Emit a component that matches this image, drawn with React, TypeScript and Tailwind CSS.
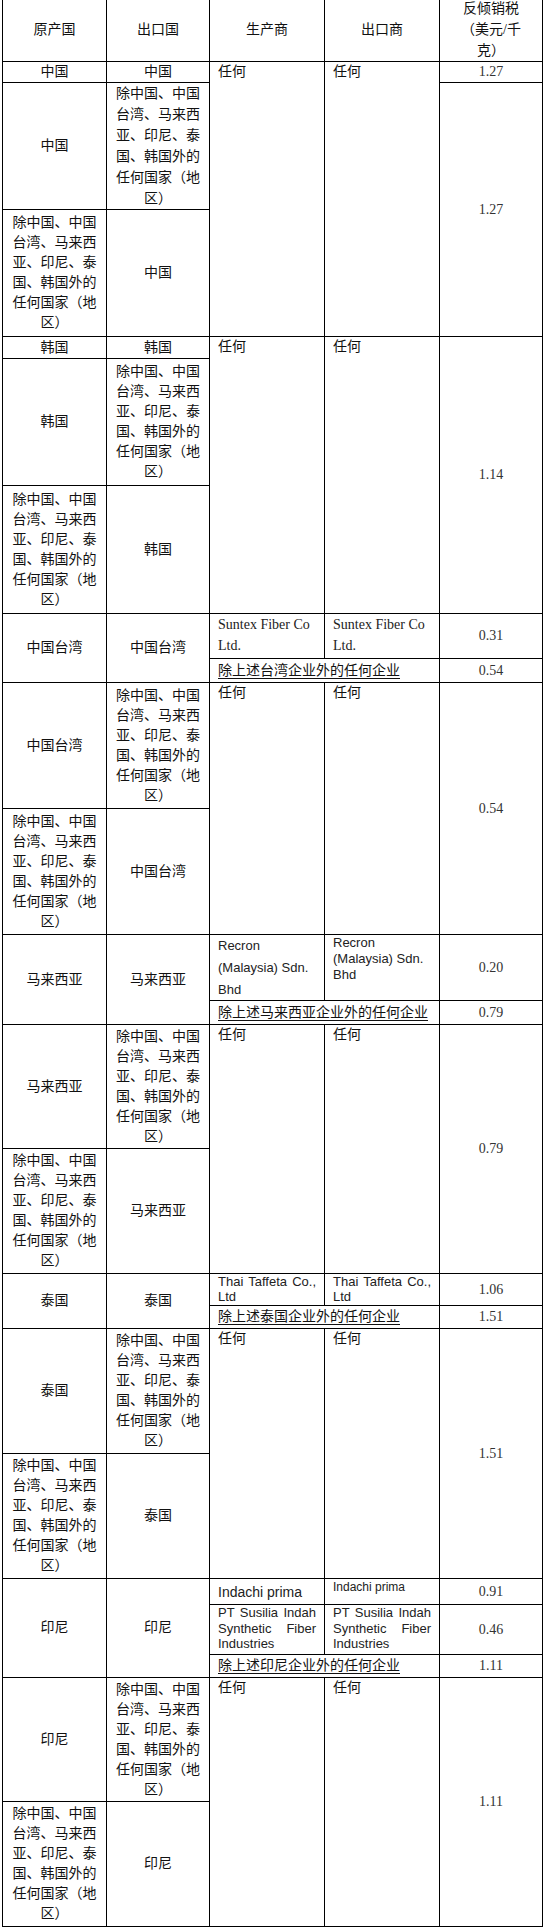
import React from "react";

const EX = "除中国、中国台湾、马来西亚、印尼、泰国、韩国外的任何国家（地区）";
const B = "border-r border-b border-black";

function Mid({ at, children, lh = "leading-[20px]" }: { at: string; children: React.ReactNode; lh?: string }) {
  return (
    <div className={`${at} ${B} flex items-center justify-center text-center px-[8px] text-[14px] ${lh} text-[#111]`}>
      <div>{children}</div>
    </div>
  );
}

function Num({ at, children }: { at: string; children: React.ReactNode }) {
  return (
    <div className={`${at} ${B} flex items-center justify-center text-[14px] leading-[20px] text-[#333]`}>
      {children}
    </div>
  );
}

function Top({ at, children }: { at: string; children: React.ReactNode }) {
  return <div className={`${at} ${B} px-[8px] text-[14px] leading-[20px] text-[#111]`}>{children}</div>;
}

function Left({ at, children }: { at: string; children: React.ReactNode }) {
  return (
    <div className={`${at} ${B} flex items-center px-[8px] text-[14px] leading-[20px] text-[#111]`}>
      <span className="underline underline-offset-[3px] decoration-[1px]">{children}</span>
    </div>
  );
}

export default function App() {
  return (
    <div className="bg-white min-h-[1929px] w-[551px] overflow-hidden font-['Liberation_Serif','Noto_Sans_CJK_SC',serif]">
      <div className="-mt-[3px] ml-[2px] w-[541px] border-l border-t border-black grid grid-cols-[104px_103px_115px_115px_103px] grid-rows-[64px_21px_127px_127px_22px_127px_128px_45px_24px_126px_126px_66px_24px_124px_125px_32px_23px_125px_125px_26px_50px_23px_124px_125px]">
        {/* header */}
        <Mid at="row-[1] col-[1]" lh="leading-[21px]">原产国</Mid>
        <Mid at="row-[1] col-[2]" lh="leading-[21px]">出口国</Mid>
        <Mid at="row-[1] col-[3]" lh="leading-[21px]">生产商</Mid>
        <Mid at="row-[1] col-[4]" lh="leading-[21px]">出口商</Mid>
        <Mid at="row-[1] col-[5]" lh="leading-[21px]">
          反倾销税
          <br />
          （美元/千
          <br />
          克）
        </Mid>

        {/* China */}
        <Mid at="row-[2] col-[1]">中国</Mid>
        <Mid at="row-[2] col-[2]">中国</Mid>
        <Top at="row-[2/span_3] col-[3]">任何</Top>
        <Top at="row-[2/span_3] col-[4]">任何</Top>
        <Num at="row-[2] col-[5]">1.27</Num>
        <Mid at="row-[3] col-[1]">中国</Mid>
        <Mid at="row-[3] col-[2]" lh="leading-[21px]">{EX}</Mid>
        <Num at="row-[3/span_2] col-[5]">1.27</Num>
        <Mid at="row-[4] col-[1]">{EX}</Mid>
        <Mid at="row-[4] col-[2]">中国</Mid>

        {/* Korea */}
        <Mid at="row-[5] col-[1]">韩国</Mid>
        <Mid at="row-[5] col-[2]">韩国</Mid>
        <Top at="row-[5/span_3] col-[3]">任何</Top>
        <Top at="row-[5/span_3] col-[4]">任何</Top>
        <Num at="row-[5/span_3] col-[5]">1.14</Num>
        <Mid at="row-[6] col-[1]">韩国</Mid>
        <Mid at="row-[6] col-[2]">{EX}</Mid>
        <Mid at="row-[7] col-[1]">{EX}</Mid>
        <Mid at="row-[7] col-[2]">韩国</Mid>

        {/* Taiwan */}
        <Mid at="row-[8/span_2] col-[1]">中国台湾</Mid>
        <Mid at="row-[8/span_2] col-[2]">中国台湾</Mid>
        <div className={`row-[8] col-[3] ${B} px-[8px] text-[14px] leading-[21px] text-[#222]`}>Suntex Fiber Co Ltd.</div>
        <div className={`row-[8] col-[4] ${B} px-[8px] text-[14px] leading-[21px] text-[#222]`}>Suntex Fiber Co Ltd.</div>
        <Num at="row-[8] col-[5]">0.31</Num>
        <Left at="row-[9] col-[3/span_2]">除上述台湾企业外的任何企业</Left>
        <Num at="row-[9] col-[5]">0.54</Num>
        <Mid at="row-[10] col-[1]">中国台湾</Mid>
        <Mid at="row-[10] col-[2]">{EX}</Mid>
        <Top at="row-[10/span_2] col-[3]">任何</Top>
        <Top at="row-[10/span_2] col-[4]">任何</Top>
        <Num at="row-[10/span_2] col-[5]">0.54</Num>
        <Mid at="row-[11] col-[1]">{EX}</Mid>
        <Mid at="row-[11] col-[2]">中国台湾</Mid>

        {/* Malaysia */}
        <Mid at="row-[12/span_2] col-[1]">马来西亚</Mid>
        <Mid at="row-[12/span_2] col-[2]">马来西亚</Mid>
        <div className={`row-[12] col-[3] ${B} px-[8px] font-['Liberation_Sans',sans-serif] text-[13px] leading-[22px] text-[#222]`}>Recron (Malaysia) Sdn. Bhd</div>
        <div className={`row-[12] col-[4] ${B} px-[8px] font-['Liberation_Sans',sans-serif] text-[13px] leading-[16px] text-[#222]`}>Recron (Malaysia) Sdn. Bhd</div>
        <Num at="row-[12] col-[5]">0.20</Num>
        <Left at="row-[13] col-[3/span_2]">除上述马来西亚企业外的任何企业</Left>
        <Num at="row-[13] col-[5]">0.79</Num>
        <Mid at="row-[14] col-[1]">马来西亚</Mid>
        <Mid at="row-[14] col-[2]">{EX}</Mid>
        <Top at="row-[14/span_2] col-[3]">任何</Top>
        <Top at="row-[14/span_2] col-[4]">任何</Top>
        <Num at="row-[14/span_2] col-[5]">0.79</Num>
        <Mid at="row-[15] col-[1]">{EX}</Mid>
        <Mid at="row-[15] col-[2]">马来西亚</Mid>

        {/* Thailand */}
        <Mid at="row-[16/span_2] col-[1]">泰国</Mid>
        <Mid at="row-[16/span_2] col-[2]">泰国</Mid>
        <div className={`row-[16] col-[3] ${B} px-[8px] font-['Liberation_Sans',sans-serif] text-[13px] leading-[15px] text-justify text-[#222]`}>Thai Taffeta Co., Ltd</div>
        <div className={`row-[16] col-[4] ${B} px-[8px] font-['Liberation_Sans',sans-serif] text-[13px] leading-[15px] text-justify text-[#222]`}>Thai Taffeta Co., Ltd</div>
        <Num at="row-[16] col-[5]">1.06</Num>
        <Left at="row-[17] col-[3/span_2]">除上述泰国企业外的任何企业</Left>
        <Num at="row-[17] col-[5]">1.51</Num>
        <Mid at="row-[18] col-[1]">泰国</Mid>
        <Mid at="row-[18] col-[2]">{EX}</Mid>
        <Top at="row-[18/span_2] col-[3]">任何</Top>
        <Top at="row-[18/span_2] col-[4]">任何</Top>
        <Num at="row-[18/span_2] col-[5]">1.51</Num>
        <Mid at="row-[19] col-[1]">{EX}</Mid>
        <Mid at="row-[19] col-[2]">泰国</Mid>

        {/* Indonesia */}
        <Mid at="row-[20/span_3] col-[1]">印尼</Mid>
        <Mid at="row-[20/span_3] col-[2]">印尼</Mid>
        <div className={`row-[20] col-[3] ${B} flex items-center px-[8px] font-['Liberation_Sans',sans-serif] text-[14px] leading-[20px] text-[#222]`}>Indachi prima</div>
        <div className={`row-[20] col-[4] ${B} px-[8px] font-['Liberation_Sans',sans-serif] text-[12px] leading-[16px] text-[#222]`}>Indachi prima</div>
        <Num at="row-[20] col-[5]">0.91</Num>
        <div className={`row-[21] col-[3] ${B} px-[8px] font-['Liberation_Sans',sans-serif] text-[13px] leading-[15.5px] text-justify text-[#222]`}>PT Susilia Indah Synthetic Fiber Industries</div>
        <div className={`row-[21] col-[4] ${B} px-[8px] font-['Liberation_Sans',sans-serif] text-[13px] leading-[15.5px] text-justify text-[#222]`}>PT Susilia Indah Synthetic Fiber Industries</div>
        <Num at="row-[21] col-[5]">0.46</Num>
        <Left at="row-[22] col-[3/span_2]">除上述印尼企业外的任何企业</Left>
        <Num at="row-[22] col-[5]">1.11</Num>
        <Mid at="row-[23] col-[1]">印尼</Mid>
        <Mid at="row-[23] col-[2]">{EX}</Mid>
        <Top at="row-[23/span_2] col-[3]">任何</Top>
        <Top at="row-[23/span_2] col-[4]">任何</Top>
        <Num at="row-[23/span_2] col-[5]">1.11</Num>
        <Mid at="row-[24] col-[1]">{EX}</Mid>
        <Mid at="row-[24] col-[2]">印尼</Mid>
      </div>
    </div>
  );
}
